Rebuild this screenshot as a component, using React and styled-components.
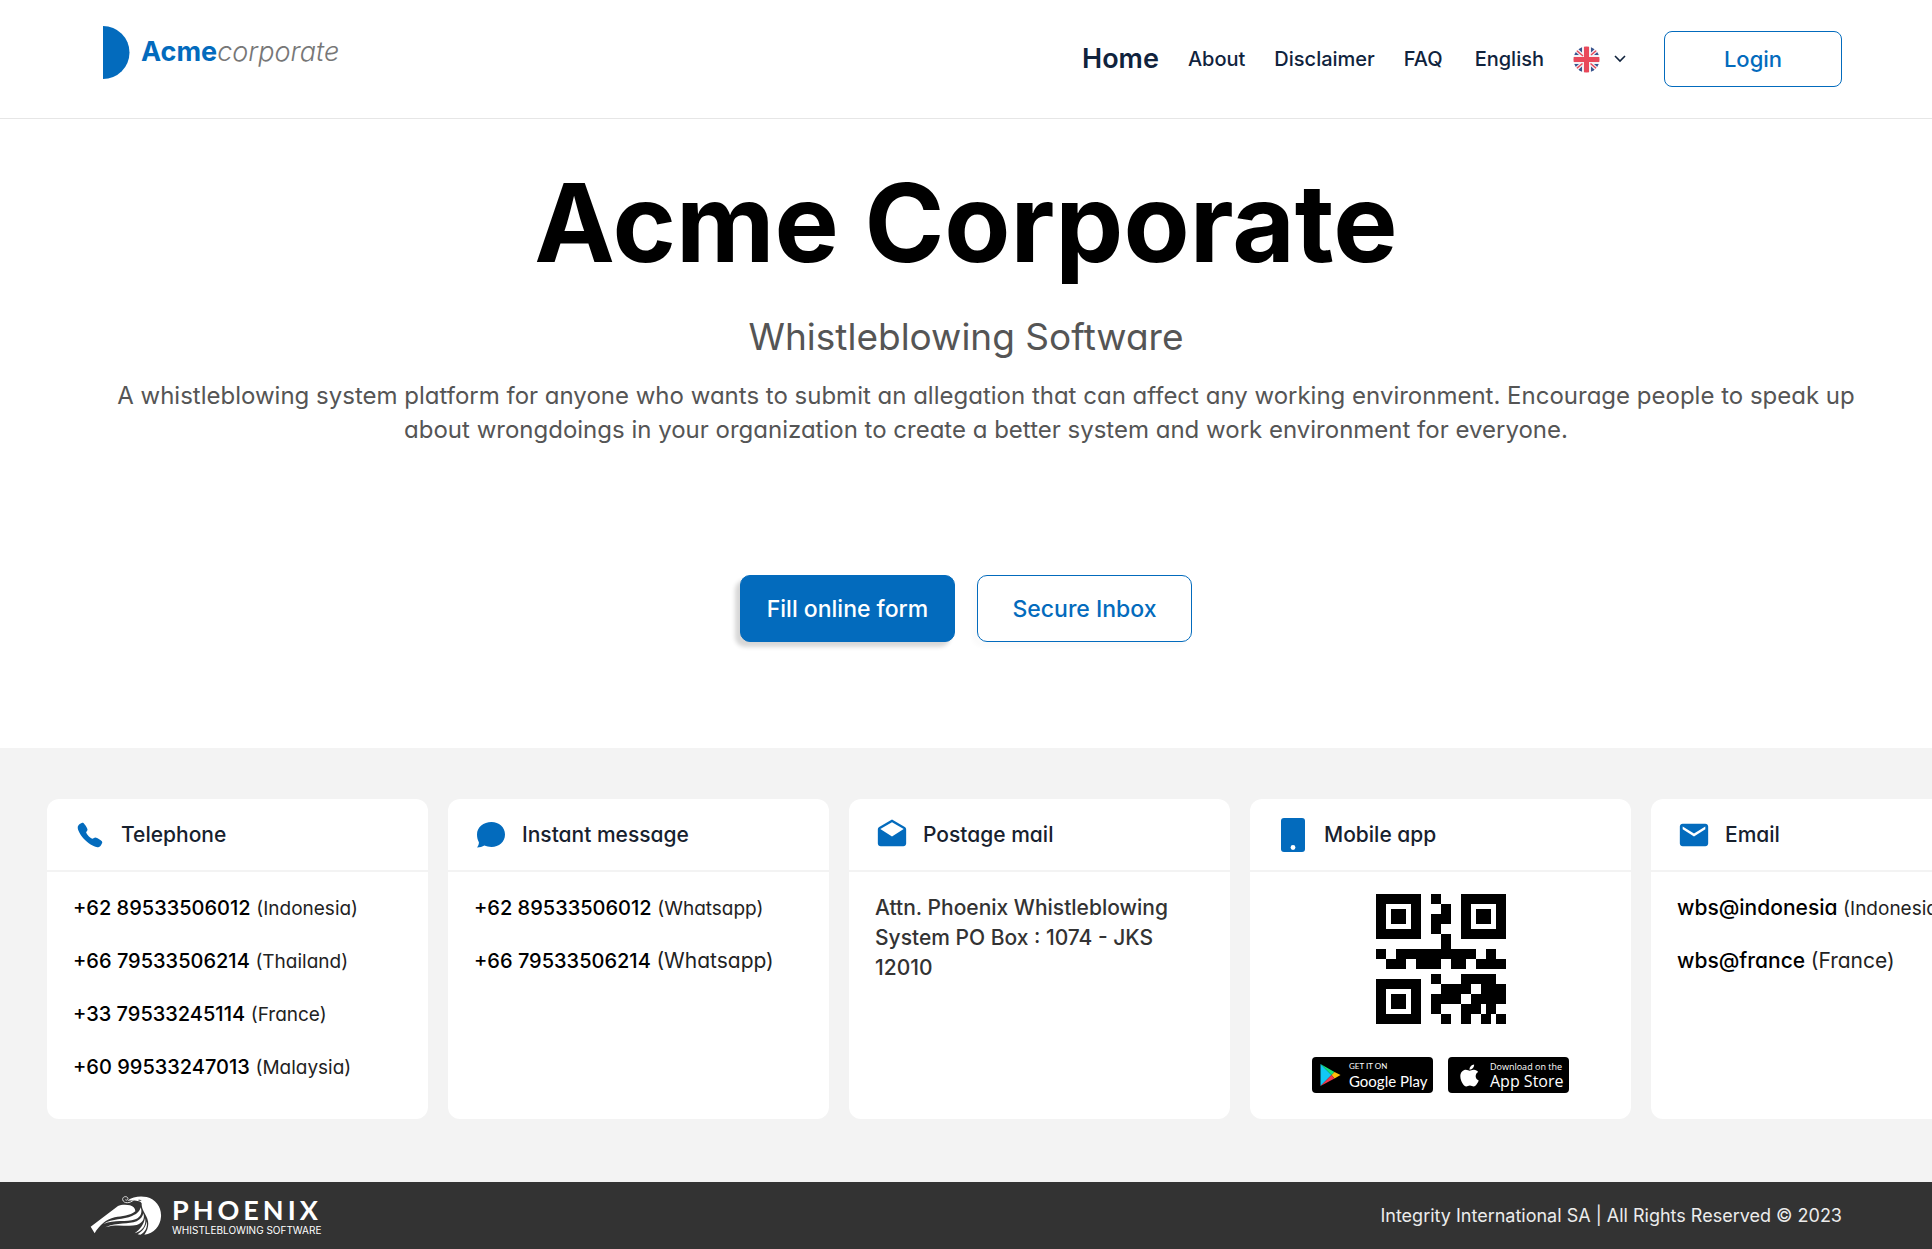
import React from 'react';
import styled, { createGlobalStyle } from 'styled-components';
import { FaApple } from 'react-icons/fa';
import { MdDrafts, MdEmail } from 'react-icons/md';
import { IoCall } from 'react-icons/io5';

const $css = {
    colors: {
        blue: '#036bbd',
        navy: '#10233d',
        ink: '#17212e',
        grey: '#555',
        light: '#f3f3f3',
        dark: '#333',
    },
    font: '"Inter", "Liberation Sans", sans-serif',
};

const GlobalStyle = createGlobalStyle`
    *{
        box-sizing: border-box;
    }
    body{
        margin: 0;
        background: #fff;
        font-family: ${$css.font};
        color: #000;
    }
    button, select{
        font-family: inherit;
    }
`;

const Header = styled('header')`
    display: flex;
    align-items: center;
    justify-content: space-between;
    min-height: 119px;
    padding: 0 90px 0 103px;
    border-bottom: 1px solid #e6e6e6;
`;
const Brand = styled('a')`
    display: flex;
    align-items: center;
    gap: 11px;
    padding-bottom: 14px;
    font-size: 27px;
    line-height: 32px;
    text-decoration: none;
    color: ${$css.colors.blue};
`;
const BrandBold = styled('span')`
    font-weight: 700;
`;
const BrandLight = styled('span')`
    font-weight: 300;
    font-style: italic;
    color: #777;
`;
const Nav = styled('nav')`
    display: flex;
    align-items: center;
    gap: 29px;
`;
const NavLink = styled('a')`
    font-size: ${p => p.$active ? 27 : 20}px;
    font-weight: ${p => p.$active ? 600 : 500};
    line-height: 32px;
    text-decoration: none;
    color: ${$css.colors.navy};
`;
const Language = styled('label')`
    position: relative;
    display: flex;
    align-items: center;
    margin-left: 3px;
`;
const LanguageSelect = styled('select')`
    appearance: none;
    field-sizing: content;
    border: 0;
    margin: 0;
    padding: 0 82px 0 0;
    background: transparent;
    font-size: 20px;
    font-weight: 500;
    line-height: 32px;
    color: ${$css.colors.navy};
`;
const LanguageIcons = styled('span')`
    position: absolute;
    right: 0;
    display: flex;
    align-items: center;
    gap: 14px;
    pointer-events: none;
`;
const LoginButton = styled('button')`
    width: 178px;
    height: 56px;
    margin-left: 9px;
    border: 1px solid ${$css.colors.blue};
    border-radius: 8px;
    background: #fff;
    font-size: 22px;
    font-weight: 500;
    color: ${$css.colors.blue};
`;

const Hero = styled('main')`
    display: flex;
    flex-direction: column;
    align-items: center;
    padding: 39px 64px 106px;
    text-align: center;
`;
const Title = styled('h1')`
    margin: 0;
    font-size: 108px;
    font-weight: 700;
    line-height: 130px;
`;
const Subtitle = styled('h2')`
    margin: 22px 0 0;
    font-size: 37px;
    font-weight: 400;
    line-height: 54px;
    font-feature-settings: "cv11";
    color: ${$css.colors.grey};
`;
const Lead = styled('p')`
    margin: 15px 0 0;
    padding-left: 40px;
    font-size: 24px;
    line-height: 34px;
    font-feature-settings: "cv11";
    color: ${$css.colors.grey};
`;
const Actions = styled('div')`
    display: flex;
    gap: 22px;
    margin-top: 128px;
`;
const ActionButton = styled('button')`
    width: 215px;
    height: 67px;
    border: 1px solid ${$css.colors.blue};
    border-radius: 10px;
    background: ${p => p.$primary ? $css.colors.blue : '#fff'};
    box-shadow: -5px 5px 4px rgba(0, 0, 0, ${p => p.$primary ? .16 : .02});
    font-size: 23px;
    font-weight: 500;
    font-feature-settings: "cv11";
    color: ${p => p.$primary ? '#fff' : $css.colors.blue};
`;

const Channels = styled('section')`
    display: flex;
    gap: 20px;
    padding: 51px 47px 63px;
    overflow: hidden;
    background: ${$css.colors.light};
    font-feature-settings: "cv11";
`;
const CardWrap = styled('article')`
    flex: 0 0 381px;
    min-height: 320px;
    border-radius: 12px;
    background: #fff;
`;
const CardHead = styled('div')`
    display: flex;
    align-items: center;
    gap: 14px;
    height: 73px;
    padding: 0 26px;
    border-bottom: 2px solid ${$css.colors.light};
`;
const CardIcon = styled('span')`
    display: flex;
    align-items: center;
    justify-content: center;
    width: 34px;
    color: ${$css.colors.blue};
`;
const CardTitle = styled('h3')`
    margin: 0;
    font-size: 21px;
    font-weight: 500;
    line-height: 30px;
    color: ${$css.colors.ink};
`;
const ContactList = styled('ul')`
    display: flex;
    flex-direction: column;
    gap: 23px;
    margin: 0;
    padding: 21px 26px;
    list-style: none;
`;
const Contact = styled('li')`
    height: 30px;
    font-size: 20px;
    line-height: 30px;
    white-space: nowrap;
`;
const ContactValue = styled('span')`
    font-size: ${p => p.$email ? 21 : 20}px;
    font-weight: 500;
`;
const ContactNote = styled('span')`
    font-size: ${p => p.$large ? 21 : 19}px;
    line-height: 1;
    color: #222;
`;
const Address = styled('address')`
    padding: 21px 56px 21px 26px;
    font-size: 21px;
    font-style: normal;
    font-weight: 500;
    line-height: 30px;
    color: ${$css.colors.dark};
`;
const AppBody = styled('div')`
    display: flex;
    flex-direction: column;
    align-items: center;
    gap: 33px;
    padding-top: 22px;
`;
const Stores = styled('div')`
    display: flex;
    gap: 15px;
`;
const StoreLink = styled('a')`
    display: flex;
    align-items: center;
    gap: 8px;
    width: 121px;
    height: 36px;
    padding-left: ${p => p.$left}px;
    border-radius: 4px;
    background: #000;
    color: #fff;
    text-decoration: none;
    white-space: nowrap;
`;
const StoreText = styled('span')`
    display: flex;
    flex-direction: column;
    font-family: ${p => p.$family}, sans-serif;
`;
const StoreSmall = styled('span')`
    font-size: ${p => p.$size}px;
    line-height: 11px;
`;
const StoreName = styled('span')`
    font-size: ${p => p.$size}px;
    line-height: 18px;
`;

const FooterBar = styled('footer')`
    display: flex;
    align-items: center;
    justify-content: space-between;
    min-height: 67px;
    padding: 0 90px;
    background: ${$css.colors.dark};
    color: #ececec;
`;
const FooterBrand = styled('a')`
    display: flex;
    align-items: center;
    gap: 10px;
    color: #fff;
    text-decoration: none;
`;
const FooterBrandText = styled('span')`
    display: flex;
    flex-direction: column;
`;
const FooterBrandName = styled('span')`
    font-family: Lato, sans-serif;
    font-size: 27px;
    font-weight: 700;
    line-height: 28px;
    letter-spacing: 4px;
`;
const FooterBrandNote = styled('span')`
    font-size: 10px;
    line-height: 12px;
`;
const Copyright = styled('p')`
    margin: 0;
    font-size: 18px;
    line-height: 24px;
`;

const BrandMark = () => (
    <svg width="27" height="53" viewBox="0 0 27 53" aria-hidden="true">
        <path d="M0 0a26.5 26.5 0 0 1 0 53z" fill={$css.colors.blue} />
    </svg>
);

const Flag = () => (
    <svg width="27" height="27" viewBox="0 0 54 54" aria-hidden="true">
        <defs>
            <clipPath id="flag-round"><circle cx="27" cy="27" r="26" /></clipPath>
        </defs>
        <g clipPath="url(#flag-round)">
            <rect width="54" height="54" fill="#f4f1f4" />
            <path d="M18 0v13L8 4zM36 0v13L46 4zM18 54V41L8 50zM36 54V41l10 9zM0 18h12L3 10zM0 36h12L3 44zM54 18H42l9-8zM54 36H42l9 8z" fill="#38558f" />
            <path d="M6 8l14 12M48 8L36 18M6 46l13-11M48 46L35 35" stroke="#e9485a" strokeWidth="3" />
            <path d="M22 0h10v22h22v10H32v22H22V32H0V22h22z" fill="#e9485a" />
        </g>
    </svg>
);

const Chevron = () => (
    <svg width="12" height="8" viewBox="0 0 12 8" aria-hidden="true">
        <path d="M1 1l5 5 5-5" fill="none" stroke={$css.colors.navy} strokeWidth="1.6" />
    </svg>
);

const ChatIcon = () => (
    <svg width="28" height="26" viewBox="0 0 28 26" aria-hidden="true">
        <path d="M14.500 0C22 0 28 5.200 28 12.500S22 25 14.500 25c-2.600 0-5-.6-7.200-1.400C5.500 25 2.800 25.400 0 25.400c1.300-1.600 2-3.400 1.900-5.200C.7 18 0 15.500 0 12.500 0 5.200 6.500 0 14.500 0z" fill="currentColor" />
    </svg>
);

const MobileIcon = () => (
    <svg width="24" height="34" viewBox="0 0 24 34" aria-hidden="true">
        <rect width="24" height="34" rx="3" fill="currentColor" />
        <circle cx="12" cy="29.500" r="2.400" fill="#fff" />
    </svg>
);

// [y, height, [x start, x end], ...] on a 26 by 26 grid
const qrRows = [
    [0, 2, [11, 13]],
    [2, 2, [13, 15]],
    [4, 2, [11, 15]],
    [6, 2, [11, 13]],
    [8, 3, [13, 15]],
    [11, 2, [0, 2], [4, 20], [22, 24]],
    [13, 2, [2, 6], [8, 13], [15, 18], [20, 26]],
    [16, 2, [11, 13], [17, 24]],
    [18, 2, [13, 19], [21, 26]],
    [20, 2, [11, 17], [19, 26]],
    [22, 2, [11, 13], [17, 21], [22, 24]],
    [24, 2, [13, 15], [17, 19], [21, 23], [24, 26]],
];
const qrCorners = [[0, 0], [17, 0], [0, 17]];

const QrCode = () => (
    <svg width="130" height="130" viewBox="0 0 26 26" shapeRendering="crispEdges" role="img" aria-label="QR code">
        {qrCorners.map(([x, y]) => (
            <path key={`${x}-${y}`} fillRule="evenodd" d={`M${x} ${y}h9v9h-9zm2 2v5h5v-5zm1 1h3v3h-3z`} />
        ))}
        {qrRows.map(([y, height, ...runs]) => runs.map(([from, to]) => (
            <rect key={`${y}-${from}`} x={from} y={y} width={to - from} height={height} />
        )))}
    </svg>
);

const PlayIcon = () => (
    <svg width="21" height="24" viewBox="0 0 42 48" aria-hidden="true">
        <path d="M1 2v44l22-22z" fill="#12c8f4" />
        <path d="M1 2l28 16-6 6z" fill="#15e07a" />
        <path d="M29 18l12 6-12 7-6-7z" fill="#fdbd0b" />
        <path d="M1 46l22-22 6 7z" fill="#f0384e" />
    </svg>
);

const PhoenixMark = () => (
    <svg width="72" height="39" viewBox="0 0 216 117" aria-hidden="true">
        <g fill="#fff">
            <path d="M2 92L84 30c8-4 24-5 36-2 10 3 16 10 16 18-16 14-40 14-62 18-26 6-46 24-60 48z" />
            <path d="M112 14C128 2 150-1 170 3c28 7 45 31 43 59-2 28-21 50-50 54 11-14 15-32 9-48-6-16-18-28-17-46-3-8-17-10-43-8z" />
            <path d="M40 84c28-18 60-12 86-24 16-6 24-16 26-26 6 16 0 30-16 36-28 10-62 0-96 14z" />
            <path d="M46 94c36-16 70-8 94-18 12-6 18-14 20-24 6 18-4 30-20 35-28 7-58-5-94 7z" />
            <path d="M165 66c5 20-7 40-31 46 16-12 27-26 31-46zM170 76c4 18-5 34-19 40-3 0-5 0-8-1 14-9 24-21 27-39z" />
        </g>
        <path d="M131 12c-10 10-30 12-33-1-1-9 10-12 15-6 3 5-3 10-7 6" fill="none" stroke="#ddd" strokeWidth="3" />
        <path d="M144 12c5-2 8-1 11 2-4 1-8 1-11-2z" fill="#333" />
    </svg>
);

const nav = ['About', 'Disclaimer', 'FAQ'];

const channels = [
    {
        title: 'Telephone',
        icon: <IoCall size={28} />,
        contacts: [
            { value: '+62 89533506012', note: '(Indonesia)' },
            { value: '+66 79533506214', note: '(Thailand)' },
            { value: '+33 79533245114', note: '(France)' },
            { value: '+60 99533247013', note: '(Malaysia)' },
        ],
    },
    {
        title: 'Instant message',
        icon: <ChatIcon />,
        contacts: [
            { value: '+62 89533506012', note: '(Whatsapp)' },
            { value: '+66 79533506214', note: '(Whatsapp)', large: true },
        ],
    },
    {
        title: 'Postage mail',
        icon: <MdDrafts size={34} />,
        address: 'Attn. Phoenix Whistleblowing System PO Box : 1074 - JKS 12010',
    },
    {
        title: 'Mobile app',
        icon: <MobileIcon />,
        app: true,
    },
    {
        title: 'Email',
        icon: <MdEmail size={34} />,
        contacts: [
            { value: 'wbs@indonesia', note: '(Indonesia)', email: true },
            { value: 'wbs@france', note: '(France)', email: true, large: true },
        ],
    },
];

const AppLinks = () => (
    <AppBody>
        <QrCode />
        <Stores>
            <StoreLink href="#google-play" $left={8}>
                <PlayIcon />
                <StoreText $family="Lato">
                    <StoreSmall $size={8}>GET IT ON</StoreSmall>
                    <StoreName $size={15}>Google Play</StoreName>
                </StoreText>
            </StoreLink>
            <StoreLink href="#app-store" $left={9}>
                <FaApple size={25} />
                <StoreText $family="Open Sans">
                    <StoreSmall $size={9}>Download on the</StoreSmall>
                    <StoreName $size={16}>App Store</StoreName>
                </StoreText>
            </StoreLink>
        </Stores>
    </AppBody>
);

const Card = ({ title, icon, contacts, address, app }) => (
    <CardWrap>
        <CardHead>
            <CardIcon>{icon}</CardIcon>
            <CardTitle>{title}</CardTitle>
        </CardHead>
        {contacts && (
            <ContactList>
                {contacts.map(({ value, note, email, large }) => (
                    <Contact key={value}>
                        <ContactValue $email={email}>{value}</ContactValue> <ContactNote $large={large}>{note}</ContactNote>
                    </Contact>
                ))}
            </ContactList>
        )}
        {address && <Address>{address}</Address>}
        {app && <AppLinks />}
    </CardWrap>
);

const App = () => (
    <>
        <GlobalStyle />
        <Header>
            <Brand href="#home">
                <BrandMark />
                <span><BrandBold>Acme</BrandBold><BrandLight>corporate</BrandLight></span>
            </Brand>
            <Nav>
                <NavLink href="#home" $active>Home</NavLink>
                {nav.map(item => <NavLink key={item} href={`#${item.toLowerCase()}`}>{item}</NavLink>)}
                <Language>
                    <LanguageSelect aria-label="Language" defaultValue="en">
                        <option value="en">English</option>
                    </LanguageSelect>
                    <LanguageIcons><Flag /><Chevron /></LanguageIcons>
                </Language>
                <LoginButton type="button">Login</LoginButton>
            </Nav>
        </Header>
        <Hero>
            <Title>Acme Corporate</Title>
            <Subtitle>Whistleblowing Software</Subtitle>
            <Lead>
                A whistleblowing system platform for anyone who wants to submit an allegation that can affect any
                working environment. Encourage people to speak up about wrongdoings in your organization to create
                a better system and work environment for everyone.
            </Lead>
            <Actions>
                <ActionButton type="button" $primary>Fill online form</ActionButton>
                <ActionButton type="button">Secure Inbox</ActionButton>
            </Actions>
        </Hero>
        <Channels>
            {channels.map(channel => <Card key={channel.title} {...channel} />)}
        </Channels>
        <FooterBar>
            <FooterBrand href="#home">
                <PhoenixMark />
                <FooterBrandText>
                    <FooterBrandName>PHOENIX</FooterBrandName>
                    <FooterBrandNote>WHISTLEBLOWING SOFTWARE</FooterBrandNote>
                </FooterBrandText>
            </FooterBrand>
            <Copyright>Integrity International SA | All Rights Reserved © 2023</Copyright>
        </FooterBar>
    </>
);

export default App;
